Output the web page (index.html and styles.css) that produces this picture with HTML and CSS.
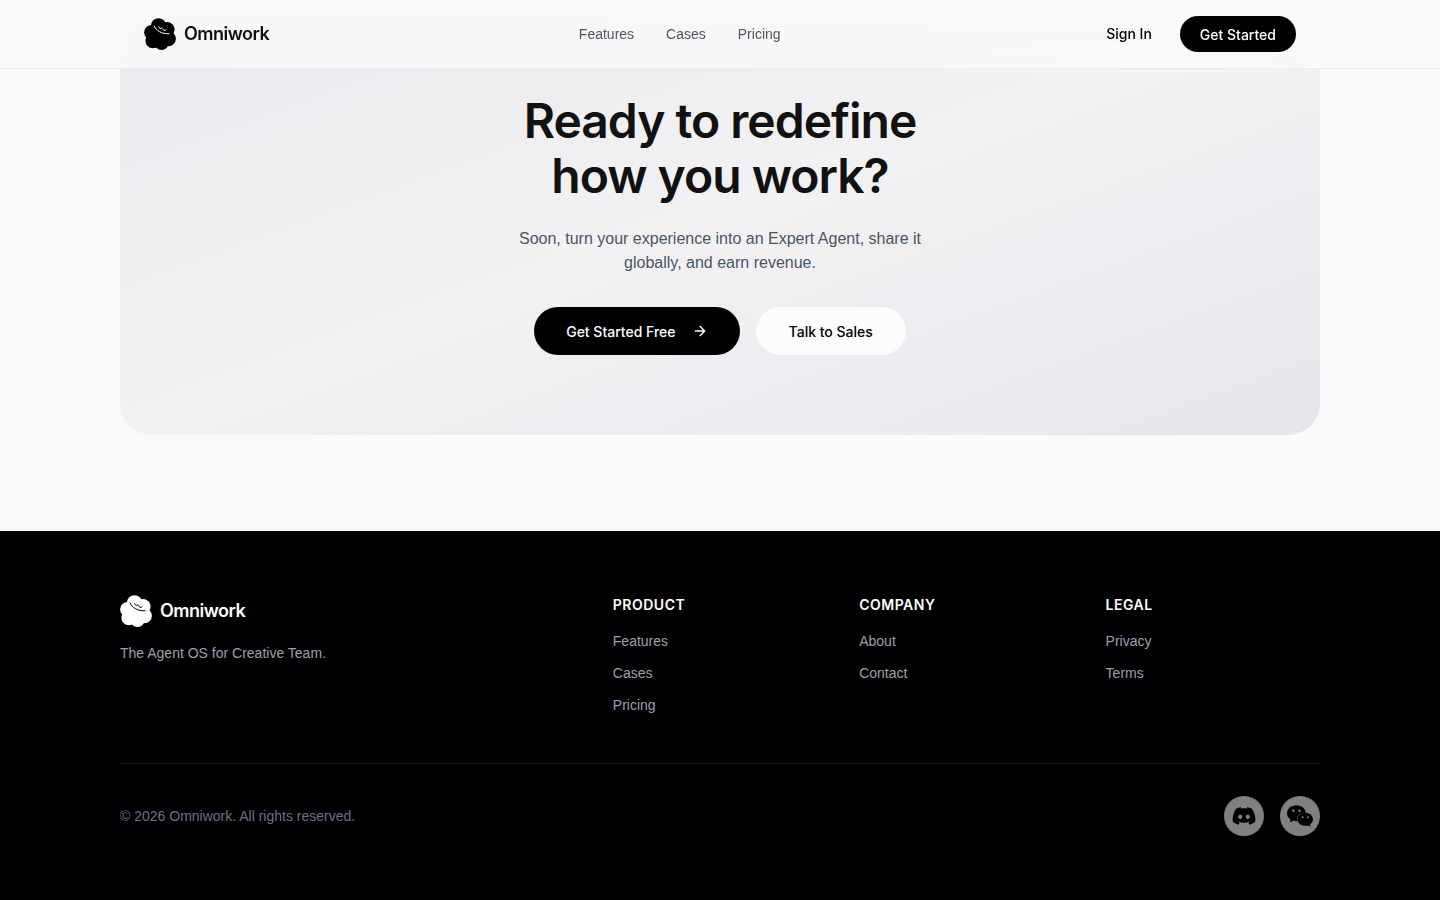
FILE: index.html
```html
<!DOCTYPE html>
<html lang="en">
<head>
    <meta charset="UTF-8">
    <meta name="viewport" content="width=device-width, initial-scale=1.0">
    <title>Omniwork</title>
    <link rel="stylesheet" href="styles.css">
</head>
<body>
    <header class="header">
        <div class="header-inner">
            <a class="brand" href="#">
                <svg class="logo" viewBox="0 0 32 32" aria-hidden="true">
                    <g fill="currentColor">
                        <circle cx="14.5" cy="7.6" r="7.4"/>
                        <circle cx="23" cy="11.6" r="7.6"/>
                        <circle cx="24.4" cy="20.8" r="7.5"/>
                        <circle cx="17.5" cy="24.4" r="7.5"/>
                        <circle cx="8.8" cy="22.8" r="7.4"/>
                        <circle cx="7.6" cy="14.4" r="7.5"/>
                        <circle cx="16" cy="16" r="10"/>
                    </g>
                    <g class="logo-face">
                        <path d="M10.2 8c1.6 4.4 7.6 8.4 14.8 7.7"/>
                        <path d="M14.8 8.8c.2 1.7 2 2.3 3.3 1.1M18.8 10.8c.2 1.7 2 2.3 3.3 1.1"/>
                    </g>
                </svg>
                <span>Omniwork</span>
            </a>
            <nav class="nav">
                <a href="#features">Features</a>
                <a href="#cases">Cases</a>
                <a href="#pricing">Pricing</a>
            </nav>
            <div class="actions">
                <a class="sign-in" href="#signin">Sign In</a>
                <button class="btn btn-small" type="button">Get Started</button>
            </div>
        </div>
    </header>

    <main class="main">
        <section class="cta">
            <h1>Ready to redefine<br>how you work?</h1>
            <p>Soon, turn your experience into an Expert Agent, share it globally, and earn revenue.</p>
            <div class="cta-buttons">
                <button class="btn" type="button">
                    Get Started Free
                    <svg class="arrow" viewBox="0 0 24 24" aria-hidden="true"><path d="M5 12h14M12 5l7 7-7 7"/></svg>
                </button>
                <button class="btn btn-light" type="button">Talk to Sales</button>
            </div>
        </section>
    </main>

    <footer class="footer">
        <div class="container">
            <div class="footer-grid">
                <div class="footer-about">
                    <a class="brand brand-light" href="#">
                        <svg class="logo" viewBox="0 0 32 32" aria-hidden="true">
                            <g fill="currentColor">
                                <circle cx="14.5" cy="7.6" r="7.4"/>
                                <circle cx="23" cy="11.6" r="7.6"/>
                                <circle cx="24.4" cy="20.8" r="7.5"/>
                                <circle cx="17.5" cy="24.4" r="7.5"/>
                                <circle cx="8.8" cy="22.8" r="7.4"/>
                                <circle cx="7.6" cy="14.4" r="7.5"/>
                                <circle cx="16" cy="16" r="10"/>
                            </g>
                            <g class="logo-face">
                                <path d="M10.2 8c1.6 4.4 7.6 8.4 14.8 7.7"/>
                                <path d="M14.8 8.8c.2 1.7 2 2.3 3.3 1.1M18.8 10.8c.2 1.7 2 2.3 3.3 1.1"/>
                            </g>
                        </svg>
                        <span>Omniwork</span>
                    </a>
                    <p>The Agent OS for Creative Team.</p>
                </div>
                <div>
                    <h2>PRODUCT</h2>
                    <ul>
                        <li><a href="#features">Features</a></li>
                        <li><a href="#cases">Cases</a></li>
                        <li><a href="#pricing">Pricing</a></li>
                    </ul>
                </div>
                <div>
                    <h2>COMPANY</h2>
                    <ul>
                        <li><a href="#about">About</a></li>
                        <li><a href="#contact">Contact</a></li>
                    </ul>
                </div>
                <div>
                    <h2>LEGAL</h2>
                    <ul>
                        <li><a href="#privacy">Privacy</a></li>
                        <li><a href="#terms">Terms</a></li>
                    </ul>
                </div>
            </div>
            <div class="footer-bottom">
                <p>© 2026 Omniwork. All rights reserved.</p>
                <div class="social">
                    <a href="#discord" aria-label="Discord">
                        <svg viewBox="0 0 24 24"><path d="M19.27 5.33C17.94 4.71 16.5 4.26 15 4a.09.09 0 0 0-.07.03c-.18.33-.39.76-.53 1.09a16.09 16.09 0 0 0-4.8 0c-.14-.34-.35-.76-.54-1.09-.01-.02-.04-.03-.07-.03-1.5.26-2.93.71-4.27 1.33-.01 0-.02.01-.03.02-2.72 4.07-3.47 8.03-3.1 11.95 0 .02.01.04.03.05 1.8 1.32 3.53 2.12 5.24 2.65.03.01.06 0 .07-.02.4-.55.76-1.13 1.07-1.74.02-.04 0-.08-.04-.09-.57-.22-1.11-.48-1.64-.78-.04-.02-.04-.08-.01-.11.11-.08.22-.17.33-.25.02-.02.05-.02.07-.01 3.44 1.57 7.15 1.57 10.55 0 .02-.01.05-.01.07.01.11.09.22.17.33.26.04.03.04.09-.01.11-.52.31-1.07.56-1.64.78-.04.01-.05.06-.04.09.32.61.68 1.19 1.07 1.74.03.01.06.02.09.01 1.72-.53 3.45-1.33 5.25-2.65.02-.01.03-.03.03-.05.44-4.53-.73-8.46-3.1-11.95-.01-.01-.02-.02-.04-.02zM8.52 14.91c-1.03 0-1.89-.95-1.89-2.12s.84-2.12 1.89-2.12c1.06 0 1.9.96 1.89 2.12 0 1.17-.84 2.12-1.89 2.12zm6.97 0c-1.03 0-1.89-.95-1.89-2.12s.84-2.12 1.89-2.12c1.06 0 1.9.96 1.89 2.12 0 1.17-.83 2.12-1.89 2.12z"/></svg>
                    </a>
                    <a href="#wechat" aria-label="WeChat">
                        <svg viewBox="0 0 24 24"><path d="M8.691 2.188C3.891 2.188 0 5.476 0 9.53c0 2.212 1.17 4.203 3.002 5.55a.59.59 0 0 1 .213.665l-.39 1.48c-.019.07-.048.141-.048.213 0 .163.13.295.29.295a.326.326 0 0 0 .167-.054l1.903-1.114a.864.864 0 0 1 .717-.098 10.16 10.16 0 0 0 2.837.403c.276 0 .543-.027.811-.05-.857-2.578.157-4.972 1.932-6.446 1.703-1.415 3.882-1.98 5.853-1.838-.576-3.583-4.196-6.348-8.596-6.348zM5.785 5.991c.642 0 1.162.529 1.162 1.18a1.17 1.17 0 0 1-1.162 1.178A1.17 1.17 0 0 1 4.623 7.17c0-.651.52-1.18 1.162-1.18zm5.813 0c.642 0 1.162.529 1.162 1.18a1.17 1.17 0 0 1-1.162 1.178 1.17 1.17 0 0 1-1.162-1.178c0-.651.52-1.18 1.162-1.18zm5.34 2.867c-1.797-.052-3.746.512-5.28 1.786-1.72 1.428-2.687 3.72-1.78 6.22.942 2.453 3.666 4.229 6.884 4.229.826 0 1.622-.12 2.361-.336a.722.722 0 0 1 .598.082l1.584.926a.272.272 0 0 0 .14.047c.134 0 .24-.111.24-.247 0-.06-.023-.12-.038-.177l-.327-1.233a.582.582 0 0 1-.023-.156.49.49 0 0 1 .201-.398C23.024 18.48 24 16.82 24 14.98c0-3.21-2.931-5.837-6.656-6.088V8.89c-.135-.01-.27-.027-.407-.03zm-2.53 3.274c.535 0 .969.44.969.982a.976.976 0 0 1-.969.983.976.976 0 0 1-.969-.983c0-.542.434-.982.97-.982zm4.844 0c.535 0 .969.44.969.982a.976.976 0 0 1-.969.983.976.976 0 0 1-.969-.983c0-.542.434-.982.969-.982z"/></svg>
                    </a>
                </div>
            </div>
        </div>
    </footer>
</body>
</html>
```
FILE: styles.css
```css
* {
    box-sizing: border-box;
}

body {
    margin: 0;
    background-color: #fafafa;
    color: #000;
    font-family: 'Liberation Sans', Arial, sans-serif;
    font-size: 14px;
    line-height: 20px;
}

h1, h2, p, ul {
    margin: 0;
    padding: 0;
}

ul {
    list-style: none;
}

a {
    color: inherit;
    text-decoration: none;
}

h1, h2, .brand, .btn, .sign-in {
    font-family: Inter, 'Liberation Sans', sans-serif;
}

/* header */
.header {
    position: fixed;
    top: 0;
    left: 0;
    right: 0;
    z-index: 10;
    background-color: rgba(250, 250, 250, 0.8);
    backdrop-filter: blur(12px);
    border-bottom: 1px solid #ebebeb;
}

.header-inner {
    display: flex;
    justify-content: space-between;
    align-items: center;
    max-width: 1200px;
    margin: 0 auto;
    padding: 16px 24px;
}

.brand {
    display: flex;
    align-items: center;
    gap: 8px;
    font-size: 18px;
    line-height: 28px;
    font-weight: 600;
    letter-spacing: -0.5px;
    color: #111;
}

.logo {
    width: 32px;
    height: 32px;
    color: #000;
}

.logo-face {
    fill: none;
    stroke: #fff;
    stroke-width: 1;
    stroke-linecap: round;
}

.nav {
    display: flex;
    gap: 32px;
    color: #4a5565;
}

.actions {
    display: flex;
    align-items: center;
    gap: 12px;
}

.sign-in {
    padding: 0 16px;
    font-weight: 500;
}

.btn {
    display: flex;
    align-items: center;
    gap: 16px;
    height: 48px;
    padding: 0 32px;
    border: none;
    border-radius: 24px;
    background-color: #000;
    color: #fff;
    font-size: 14px;
    font-weight: 500;
    cursor: pointer;
}

.btn-small {
    height: 36px;
    padding: 0 20px;
}

.btn-light {
    border: 1px solid #fcfcfc;
    background-color: #fcfcfc;
    color: #000;
}

.arrow {
    width: 16px;
    height: 16px;
    fill: none;
    stroke: currentColor;
    stroke-width: 2;
    stroke-linecap: round;
    stroke-linejoin: round;
}

/* call to action */
.main {
    max-width: 1200px;
    margin: 0 auto;
    padding: 13px 0 96px;
}

.cta {
    display: flex;
    flex-direction: column;
    align-items: center;
    padding: 80px 24px;
    border-radius: 32px;
    background: linear-gradient(160deg, #eaeaee, #f2f2f4 50%, #e6e5eb);
    text-align: center;
}

.cta h1 {
    margin-bottom: 24px;
    font-size: 48px;
    line-height: 55px;
    font-weight: 600;
    letter-spacing: -1px;
    color: #111;
}

.cta p {
    max-width: 448px;
    margin-bottom: 32px;
    font-size: 16px;
    line-height: 24px;
    color: #4a5565;
}

.cta-buttons {
    display: flex;
    gap: 16px;
}

/* footer */
.footer {
    padding: 64px 24px;
    background-color: #000;
    color: #99a1af;
}

.container {
    max-width: 1200px;
    margin: 0 auto;
}

.footer-grid {
    display: grid;
    grid-template-columns: repeat(5, 1fr);
    gap: 32px;
    margin-bottom: 48px;
}

.footer-about {
    grid-column: span 2;
}

.footer-about p {
    margin-top: 16px;
}

.brand-light, .brand-light .logo {
    color: #fff;
}

.brand-light .logo-face {
    stroke: #000;
}

.footer h2 {
    margin-bottom: 16px;
    font-size: 14px;
    line-height: 20px;
    font-weight: 600;
    letter-spacing: 0.5px;
    color: #fff;
}

.footer li + li {
    margin-top: 12px;
}

.footer-bottom {
    display: flex;
    justify-content: space-between;
    align-items: center;
    padding-top: 32px;
    border-top: 1px solid #1a1a1a;
    color: #6a7282;
}

.social {
    display: flex;
    gap: 16px;
}

.social a {
    display: flex;
    align-items: center;
    justify-content: center;
    width: 40px;
    height: 40px;
    border-radius: 50%;
    background-color: #808080;
    color: #000;
}

.social svg {
    width: 26px;
    height: 26px;
    fill: currentColor;
}
```
